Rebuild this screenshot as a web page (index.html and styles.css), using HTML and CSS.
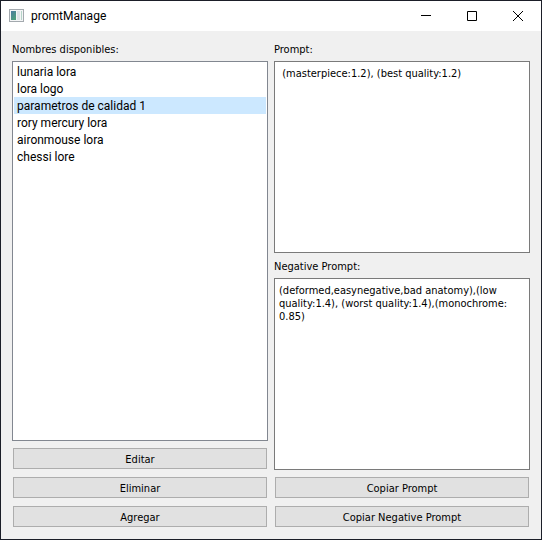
FILE: index.html
```html
<!DOCTYPE html>
<html lang="es">
<head>
<meta charset="utf-8">
<title>promtManage</title>
<meta name="viewport" content="width=device-width, initial-scale=1">
<link rel="stylesheet" href="styles.css">
</head>
<body>
<div class="window">
  <header class="titlebar">
    <svg class="app-icon" width="16" height="14" viewBox="0 0 16 14" aria-hidden="true">
      <defs>
        <linearGradient id="pane" x1="0" y1="0" x2="0.6" y2="1">
          <stop offset="0" stop-color="#4c7ba0"/>
          <stop offset="1" stop-color="#4f9e7c"/>
        </linearGradient>
      </defs>
      <rect x="0.5" y="0.5" width="14" height="12" fill="#f4f5f6" stroke="#a3a9ae"/>
      <rect x="2" y="2" width="5" height="9" fill="url(#pane)"/>
      <rect x="8" y="2" width="3" height="9" fill="#dfe3e6"/>
      <rect x="12" y="2" width="1" height="9" fill="#b5d4c8"/>
    </svg>
    <h1 class="title">promtManage</h1>
    <button class="caption" type="button" aria-label="Minimizar">
      <svg width="10" height="10" viewBox="0 0 10 10"><path d="M0 4.5h10"/></svg>
    </button>
    <button class="caption" type="button" aria-label="Maximizar">
      <svg width="10" height="10" viewBox="0 0 10 10"><path d="M0.5 0.5h9v9h-9z"/></svg>
    </button>
    <button class="caption" type="button" aria-label="Cerrar">
      <svg width="10" height="10" viewBox="0 0 10 10"><path d="M0 0l10 10M10 0L0 10"/></svg>
    </button>
  </header>
  <main class="content">
    <section class="column">
      <label for="names">Nombres disponibles:</label>
      <select class="field names" id="names" size="6">
        <option>lunaria lora</option>
        <option>lora logo</option>
        <option selected>parametros de calidad 1</option>
        <option>rory mercury lora</option>
        <option>aironmouse lora</option>
        <option>chessi lore</option>
      </select>
      <button class="push" type="button">Editar</button>
      <button class="push" type="button">Eliminar</button>
      <button class="push" type="button">Agregar</button>
    </section>
    <section class="column">
      <label for="prompt">Prompt:</label>
      <textarea class="field text" id="prompt" spellcheck="false"> (masterpiece:1.2), (best quality:1.2)</textarea>
      <label for="negative">Negative Prompt:</label>
      <textarea class="field text" id="negative" spellcheck="false">(deformed,easynegative,bad anatomy),(low
quality:1.4), (worst quality:1.4),(monochrome:
0.85)</textarea>
      <button class="push" type="button">Copiar Prompt</button>
      <button class="push" type="button">Copiar Negative Prompt</button>
    </section>
  </main>
</div>
</body>
</html>
```
FILE: styles.css
```css
* {
  box-sizing: border-box;
}

body {
  margin: 0;
  color: #000;
  font: 11px/13px "DejaVu Sans Condensed", "DejaVu Sans", sans-serif;
}

.window {
  display: flex;
  flex-direction: column;
  min-height: 100vh;
  border: 1px solid #1b1e28;
  background: #f0f0f0;
}

.titlebar {
  display: flex;
  align-items: center;
  height: 30px;
  padding-left: 8px;
  background: #fff;
}

.title {
  flex: 1;
  margin: 0 0 0 6px;
  font: 12px/16px Roboto, sans-serif;
}

.caption {
  display: grid;
  place-items: center;
  width: 46px;
  height: 30px;
  padding: 0;
  border: 0;
  background: none;
}

.caption svg {
  fill: none;
  stroke: #000;
}

.content {
  flex: 1;
  display: grid;
  grid-template-columns: 1fr 1fr;
  gap: 6px;
  padding: 11px;
}

.column {
  display: flex;
  flex-direction: column;
  gap: 6px;
  min-width: 0;
}

.column label {
  padding-top: 2px;
  line-height: 11px;
}

.field {
  flex: 1;
  width: 100%;
  min-height: 0;
  margin: 0;
  border: 1px solid #7a7a7a;
  border-radius: 0;
  outline: 0;
  background: #fff;
  color: #000;
}

.names {
  padding: 1px;
  border-color: #828790;
  font: 12px/17px Roboto, sans-serif;
}

.names option {
  height: 17px;
  min-height: 17px;
  padding: 2px 3px 0;
  color: #000;
}

.names option:checked {
  background: #cce8ff linear-gradient(#cce8ff, #cce8ff);
  color: #000;
}

.text {
  padding: 5px 4px;
  font: inherit;
  resize: none;
}

.push {
  height: 21px;
  margin: 1px;
  padding: 2px 0 0;
  border: 1px solid #adadad;
  background: #e1e1e1;
  color: #000;
  font: inherit;
}
```
